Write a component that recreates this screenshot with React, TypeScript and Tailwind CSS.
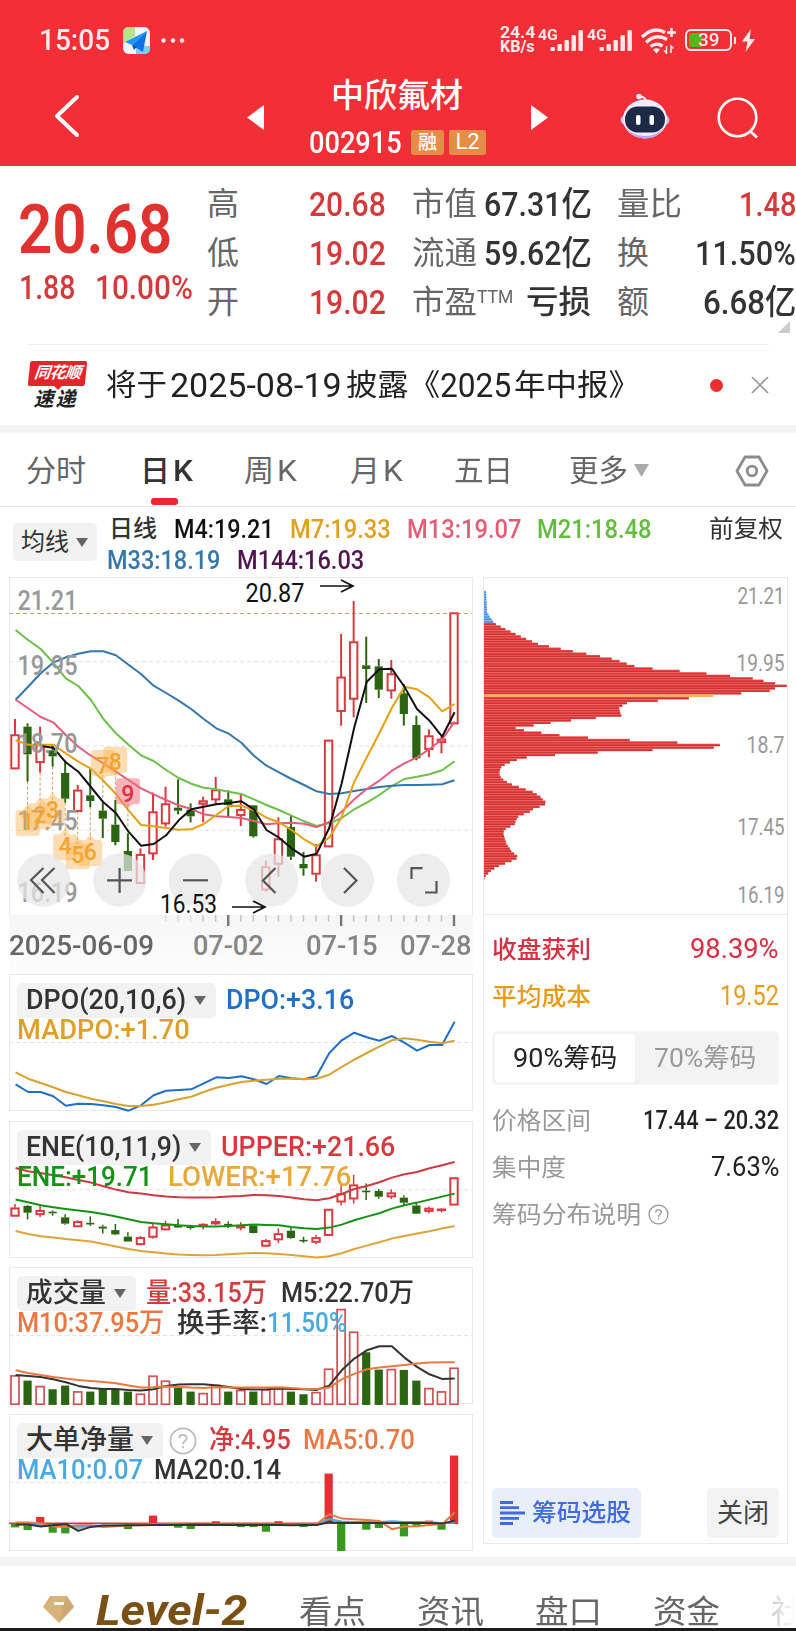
import React, { useLayoutEffect, useRef, useState } from "react";

/** Single-line text condensed horizontally so that it fills its box. */
function Fit({ className, children }: { className: string; children: React.ReactNode }) {
  const inner = useRef<HTMLSpanElement>(null);
  const outer = useRef<HTMLSpanElement>(null);
  const [scale, setScale] = useState(1);
  useLayoutEffect(() => {
    if (inner.current && outer.current && inner.current.offsetWidth) {
      setScale(outer.current.offsetWidth / inner.current.offsetWidth);
    }
  }, [children]);
  return (
    <span ref={outer} className={`block shrink-0 leading-none ${className}`}>
      <span
        ref={inner}
        className="inline-block origin-left whitespace-pre align-top leading-none"
        style={{ transform: `scaleX(${scale})` }}
      >
        {children}
      </span>
    </span>
  );
}

const STEP = 12.543;
const cx = (i: number) => 15 + STEP * i;

// rising, high, body top, body bottom, low (thirds of a pixel below the pane origin)
const candles: [number, number, number, number, number][] = [
  [1, 447, 494, 597, 597], [0, 460, 470, 553, 635], [1, 470, 524, 578, 608], [0, 525, 541, 559, 590],
  [0, 572, 609, 686, 698], [1, 645, 660, 725, 725], [0, 597, 676, 693, 712], [0, 698, 722, 746, 804],
  [0, 690, 764, 816, 826], [0, 790, 843, 903, 903], [1, 835, 853, 941, 941], [1, 668, 725, 852, 870],
  [1, 650, 701, 762, 770], [0, 628, 713, 722, 733], [0, 700, 719, 739, 757], [1, 680, 692, 703, 757],
  [1, 621, 659, 690, 702], [0, 661, 688, 705, 740], [1, 670, 718, 737, 768], [0, 706, 706, 799, 803],
  [1, 872, 890, 960, 965], [1, 742, 806, 883, 920], [0, 737, 771, 860, 870], [0, 846, 882, 895, 917],
  [1, 822, 854, 913, 935], [1, 510, 510, 831, 831], [1, 192, 321, 425, 467], [1, 93, 215, 388, 442],
  [0, 200, 286, 297, 399], [0, 267, 289, 359, 384], [1, 270, 311, 363, 386], [0, 342, 370, 432, 467],
  [0, 437, 465, 565, 571], [1, 478, 497, 539, 562], [1, 500, 507, 518, 550], [1, 128, 128, 462, 462],
];

const m21 = [180, 210, 237, 278, 325, 348, 390, 447, 490, 524, 556, 573, 600, 624, 641, 653, 658, 665, 672, 688, 705, 720, 737, 754, 768, 760, 744, 718, 698, 675, 648, 627, 620, 613, 601, 574];
const m33 = [389, 350, 310, 278, 262, 251, 244, 244, 256, 284, 312, 347, 369, 392, 417, 447, 475, 491, 518, 557, 587, 607, 627, 645, 664, 672, 670, 663, 657, 651, 647, 645, 645, 644, 643, 631];
const m13 = [389, 415, 441, 457, 495, 530, 557, 580, 605, 630, 655, 673, 690, 706, 717, 733, 739, 741, 744, 753, 763, 760, 758, 761, 771, 757, 725, 688, 657, 632, 602, 580, 562, 537, 508, 455];
const m7 = [511, 524, 524, 524, 550, 575, 596, 632, 672, 721, 765, 769, 774, 779, 778, 762, 735, 708, 707, 721, 743, 757, 780, 808, 829, 803, 741, 635, 562, 490, 413, 350, 358, 382, 424, 402];
const m4 = [528, 533, 577, 605, 651, 697, 729, 785, 827, 822, 796, 751, 718, 710, 703, 699, 694, 718, 780, 803, 835, 860, 851, 774, 640, 472, 335, 298, 296, 350, 417, 452, 500, 427];

const dpo = [358, 381, 381, 394, 422, 416, 417, 421, 426, 437, 421, 391, 377, 375, 373, 355, 337, 339, 334, 343, 357, 333, 340, 343, 333, 265, 226, 203, 217, 227, 213, 233, 257, 240, 240, 170];
const madpo = [322, 341, 354, 367, 381, 391, 401, 409, 417, 423, 423, 419, 412, 403, 395, 381, 368, 359, 351, 347, 344, 341, 341, 342, 341, 329, 306, 284, 264, 245, 226, 220, 224, 230, 235, 227];
const upper = [608, 618, 623, 630, 636, 644, 652, 663, 673, 681, 685, 690, 694, 696, 697, 697, 696, 694, 692, 689, 690, 692, 697, 702, 705, 699, 686, 671, 662, 651, 637, 627, 620, 609, 600, 590];
const ene = [703, 711, 720, 726, 731, 736, 740, 746, 754, 762, 770, 774, 777, 780, 782, 784, 784, 782, 780, 778, 779, 780, 785, 789, 791, 787, 778, 765, 754, 744, 730, 720, 712, 703, 694, 685];
const lower = [797, 806, 813, 817, 821, 825, 829, 836, 844, 851, 857, 861, 865, 868, 869, 870, 869, 867, 865, 863, 864, 866, 869, 873, 877, 873, 864, 851, 841, 831, 820, 812, 805, 798, 790, 782];
const volume = [346, 363, 378, 389, 378, 394, 396, 388, 390, 396, 401, 347, 362, 385, 396, 399, 374, 396, 390, 396, 388, 385, 396, 404, 396, 326, 147, 215, 278, 330, 327, 331, 363, 384, 394, 323];
const vol5 = [346, 349, 352, 359, 368, 379, 385, 388, 388, 391, 393, 389, 379, 375, 374, 374, 378, 382, 388, 390, 389, 387, 388, 389, 391, 378, 332, 297, 272, 260, 260, 294, 322, 344, 358, 357];
const vol10 = [332, 340, 346, 352, 357, 361, 364, 367, 371, 378, 384, 383, 381, 382, 384, 385, 383, 384, 384, 384, 384, 383, 385, 388, 388, 384, 359, 343, 329, 324, 320, 316, 312, 309, 308, 308];
const net: [number, number][] = [[0, 802], [1, 810], [2, 771], [3, 818], [4, 820], [9, 807], [11, 767], [13, 803], [14, 807], [16, 784], [17, 798], [18, 801], [19, 801], [20, 815], [21, 784], [23, 801], [25, 641], [26, 873], [28, 809], [29, 804], [31, 829], [32, 797], [33, 782], [34, 809], [35, 587]];
const net5 = [788, 788, 790, 800, 801, 796, 796, 801, 799, 797, 794, 793, 793, 793, 795, 795, 794, 794, 794, 794, 794, 794, 794, 794, 793, 762, 776, 778, 780, 783, 808, 800, 799, 795, 793, 758];
const net10 = [793, 794, 796, 796, 797, 800, 799, 798, 797, 796, 795, 795, 795, 795, 795, 795, 795, 795, 795, 795, 795, 795, 795, 795, 793, 777, 785, 786, 786, 786, 784, 786, 786, 786, 790, 788];
const net20 = [794, 794, 800, 796, 792, 813, 801, 797, 797, 796, 796, 795, 795, 795, 795, 795, 795, 795, 795, 795, 795, 795, 796, 795, 795, 787, 789, 789, 789, 789, 789, 789, 789, 789, 791, 782];

const chips: [number, number][] = [
  [498, 47], [560, 50], [575, 58], [590, 69], [597, 76], [612, 105], [627, 136], [642, 168], [657, 204], [663, 232], [671, 270], [679, 309], [686, 348], [693, 387], [701, 425], [708, 447], [716, 470], [723, 492], [731, 551], [738, 630], [745, 706], [753, 783], [760, 847], [768, 882], [775, 915], [782, 950], [789, 915], [797, 898], [804, 817], [811, 737], [819, 658], [827, 557], [834, 470], [842, 455], [849, 446], [857, 448], [864, 450], [871, 453], [879, 370], [886, 300], [893, 242], [901, 187], [908, 136], [915, 158], [922, 207], [930, 265], [937, 343], [945, 478], [952, 613], [959, 750], [967, 735], [974, 560], [982, 382], [989, 259], [996, 172], [1004, 140], [1011, 120], [1018, 104], [1026, 93], [1034, 89], [1045, 86], [1056, 91], [1063, 98], [1070, 108], [1078, 124], [1085, 144], [1093, 166], [1100, 186], [1107, 198], [1115, 210], [1122, 216], [1130, 225], [1137, 225], [1144, 210], [1152, 188], [1159, 180], [1167, 160], [1174, 144], [1181, 139], [1190, 135], [1197, 133], [1204, 120], [1212, 105], [1222, 98], [1240, 103], [1256, 108], [1263, 113], [1270, 118], [1280, 124], [1290, 138], [1297, 144], [1305, 130], [1313, 110], [1320, 90], [1328, 75], [1335, 64], [1345, 53], [1352, 46], [1360, 42],
];
function chipAt(y: number) {
  for (let k = 1; k < chips.length; k++) {
    const [y0, x0] = chips[k - 1];
    const [y1, x1] = chips[k];
    if (y <= y1) return x0 + ((x1 - x0) * (y - y0)) / (y1 - y0);
  }
  return 42;
}
const chipRows = Array.from({ length: 117 }, (_, k) => 501 + k * 7.4);

function Line({ data, color, top, from = 0 }: { data: number[]; color: string; top: number; from?: number }) {
  const pts = data.map((v, k) => `${(cx(k + from) + 0.6).toFixed(1)},${(top + v / 3).toFixed(1)}`).join(" ");
  return <polyline points={pts} fill="none" stroke={color} strokeWidth="2" strokeLinejoin="round" />;
}

function Candles({ y, body = 7.4, wick = 2 }: { y: (v: number) => number; body?: number; wick?: number }) {
  return (
    <g>
      {candles.map(([up, h, t, b, l], i) => {
        const x = cx(i);
        const c = up ? "#d93a3f" : "#2c6511";
        const height = Math.max(y(b) - y(t), 1.6);
        return (
          <g key={i} stroke={c}>
            {h < t && <line x1={x} x2={x} y1={y(h)} y2={y(t)} strokeWidth={wick} />}
            {l > b && <line x1={x} x2={x} y1={y(b)} y2={y(l)} strokeWidth={wick} />}
            {up ? (
              <rect x={x - body / 2} y={y(t) + 0.6} width={body} height={Math.max(height - 1.2, 0.6)} fill="#fff" strokeWidth="2" />
            ) : (
              <rect x={x - 4.1} y={y(t)} width="8.2" height={height} fill={c} stroke="none" />
            )}
          </g>
        );
      })}
    </g>
  );
}

function Dash({ y }: { y: number }) {
  return <line x1="9" x2="472" y1={y} y2={y} stroke="#e2e2e2" strokeWidth="1" strokeDasharray="4 3" />;
}

const Caret = ({ className = "" }: { className?: string }) => (
  <svg viewBox="0 0 12 9" className={`h-[9px] w-3 shrink-0 ${className}`}>
    <path d="M0 0H12L6 9Z" fill="#666" />
  </svg>
);

const arrow = "M0 0H33M21 -6L33 0L21 6";

function MainChart() {
  const y = (v: number) => 570 + v / 3;
  const marks: [number, number, number, boolean][] = [
    [1, 753, 1, false], [2, 733, 2, false], [3, 718, 3, false], [4, 826, 4, false], [5, 853, 5, false], [6, 843, 6, false], [7, 585, 7, true], [8, 575, 8, true], [9, 670, 9, true],
  ];
  return (
    <svg viewBox="10 578 462 337" className="block h-[337px] w-[462px]">
      {[275, 528, 781].map((v) => <Dash key={v} y={y(v)} />)}
      <line x1="9" x2="472" y1="613.5" y2="613.5" stroke="#b5a36a" strokeWidth="1.2" strokeDasharray="4 3" />
      {marks.map(([i, v, , above]) => (
        <line key={i} x1={cx(i)} x2={cx(i)} y1={above ? y(v) : y(candles[i][4])} y2={above ? y(candles[i][1]) : y(v)} stroke="#c9a267" strokeWidth="1" strokeDasharray="3 2" />
      ))}
      <Candles y={y} />
      <Line data={m21} color="#6cc04a" top={570} />
      <Line data={m33} color="#3477a8" top={570} />
      <Line data={m13} color="#e55d7c" top={570} />
      <Line data={m7} color="#e5a016" top={570} />
      <Line data={m4} color="#111" top={570} from={2} />
      <g fill="#999" fontSize="27" fontWeight="500">
        {[["21.21", 610.3], ["19.95", 675], ["18.70", 752.7], ["17.45", 830], ["16.19", 901.5]].map(([t, v]) => (
          <text key={t} x="17.5" y={v} textLength="60" lengthAdjust="spacingAndGlyphs">{t}</text>
        ))}
      </g>
      {marks.map(([i, v, n, above]) => {
        const px = cx(i);
        const py = y(v);
        return (
          <g key={n}>
            <path
              d={above
                ? `M${px - 9} ${py - 15}h18q3 0 3 3v20q0 3 -3 3h-4l-5 4l-5 -4h-4q-3 0 -3 -3v-20q0 -3 3 -3Z`
                : `M${px - 9} ${py - 11}h4l5 -6l5 6h4q3 0 3 3v20q0 3 -3 3h-18q-3 0 -3 -3v-20q0 -3 3 -3Z`}
              fill={n === 9 ? "#f26a78" : "#fbb04c"}
              fillOpacity={n === 9 ? 0.5 : 0.42}
            />
            <text x={px} y={py + 8.5} textAnchor="middle" fontSize="23" fontWeight="500" fill={n === 9 ? "#dc3040" : "#f5a32a"}>{n}</text>
          </g>
        );
      })}
      <g fill="#e6e6e6" fillOpacity="0.72">
        {[43.7, 119.7, 195.3, 271.7, 347.3, 423.3].map((x) => <circle key={x} cx={x} cy="880.2" r="26.6" />)}
      </g>
      <g fill="none" stroke="#555" strokeWidth="2.200">
        <path d="M43.500 868L31 880L43.500 893M54.500 868L42 880L54.500 893" />
        <path d="M107 880.300H132M119.600 868V893" />
        <path d="M183 880.300H208" />
        <path d="M275.500 868L263 880.500L275.500 893" />
        <path d="M344 868L356.500 880.500L344 893" />
        <path d="M411.500 879V868.200H422.500M436.500 881V892.500H425" />
      </g>
      <g fill="#111" fontSize="25">
        <text x="245.500" y="601.500" textLength="59" lengthAdjust="spacingAndGlyphs">20.87</text>
        <text x="160" y="913" textLength="57" lengthAdjust="spacingAndGlyphs">16.53</text>
      </g>
      <g fill="none" stroke="#111" strokeWidth="1.7">
        <path d={arrow} transform="translate(320 586)" />
        <path d={arrow} transform="translate(232 907)" />
      </g>
    </svg>
  );
}

function TimeAxis() {
  return (
    <div className="bg-linear-to-b from-[#f6f6f6] to-[#fdfdfd]">
      <svg viewBox="9 915 464 15" className="block h-[15px] w-[464px]">
        {candles.map((_, i) => {
          if (i < 12) return null;
          const big = i === 17 || i === 26 || i === 35;
          return <line key={i} x1={cx(i)} x2={cx(i)} y1="915" y2={big ? 926 : 921.5} stroke={big ? "#777" : i < 15 ? "#ddd" : "#c4c4c4"} strokeWidth={big ? 2.4 : 1.5} />;
        })}
      </svg>
      <div className="flex h-[44px] pt-[3px] text-[27px] font-medium text-[#858585]">
        <Fit className="w-[145px] text-[#666]">2025-06-09</Fit>
        <Fit className="ml-[39px] w-[71px]">07-02</Fit>
        <Fit className="ml-[42px] w-[72px]">07-15</Fit>
        <Fit className="ml-[22px] w-[72px]">07-28</Fit>
      </div>
    </div>
  );
}

function Pane({ children, box, name, nameWidth, caretGap, extra, first, second }: {
  children: React.ReactNode; box: string; name: string; nameWidth: string; caretGap: string;
  extra?: React.ReactNode; first: React.ReactNode; second: React.ReactNode;
}) {
  return (
    <div className="relative mb-[9.7px] h-[137px] w-[464px] border border-[#e9e9e9]">
      <svg viewBox={box} className="block h-[135px] w-[462px] overflow-visible">{children}</svg>
      <div className="absolute inset-x-0 top-[8px] pl-[7px] text-[27px] font-medium">
        <div className="flex h-[35px] items-center">
          <div className="flex h-[35px] items-center rounded-[5px] bg-[#f2f2f2] pr-[10px] pl-[9px]">
            <Fit className={`text-[#333] ${nameWidth}`}>{name}</Fit>
            <Caret className={caretGap} />
          </div>
          {extra}
          {first}
        </div>
        <div className="flex h-[25px] items-center">{second}</div>
      </div>
    </div>
  );
}

const Help = ({ className }: { className: string }) => (
  <svg viewBox="0 0 28 28" fill="none" stroke="currentColor" className={`shrink-0 ${className}`}>
    <circle cx="14" cy="14" r="12.600" strokeWidth="1.7" />
    <path d="M10.300 11.300Q10.300 7.800 14 7.800T17.700 11.200Q17.700 13 15.600 14.200Q14 15.200 14 17.200M14 19V21" strokeWidth="1.7" />
  </svg>
);

function Signal() {
  return (
    <div className="flex w-[46px] shrink-0 items-end">
      <Fit className="mb-[9px] w-[20px] text-[15px] font-bold">4G</Fit>
      <svg viewBox="0 0 34 22" className="-ml-[8px] h-[22px] w-[34px]" fill="currentColor">
        {[4, 7, 11, 16, 21].map((h, k) => <rect key={k} x={k * 7 + 0.5} y={21 - h} width="4.400" height={h} rx="1" />)}
      </svg>
    </div>
  );
}

function Header() {
  return (
    <header className="h-[166px] bg-[#f22f37] text-white">
      <div className="flex h-[80px] items-center pl-[39px] text-white/90">
        <Fit className="w-[71px] text-[30px] font-medium">15:05</Fit>
        <svg viewBox="0 0 27 27" className="ml-[13px] h-[27px] w-[27px]">
          <rect width="27" height="27" rx="6" fill="#eef6f8" />
          <path d="M6 0H12V9L0 17V6Q0 0 6 0Z" fill="#b5e48c" />
          <path d="M13 19H27V21Q27 27 21 27H13Z" fill="#74d2f5" />
          <path d="M24 4L2 15L9 18Z" fill="#1e96f5" />
          <path d="M24 4L9 18L20 25Z" fill="#0f73e6" />
          <path d="M9 18L11 23L13.500 20Z" fill="#0a4fae" />
        </svg>
        <svg viewBox="0 0 24 5" className="ml-[11px] h-[5px] w-6" fill="currentColor">
          <circle cx="2.500" cy="2.500" r="2.200" /><circle cx="12" cy="2.500" r="2.200" /><circle cx="21" cy="2.500" r="2.200" />
        </svg>
        <div className="ml-[315px] text-[16px] font-bold">
          <Fit className="w-[35px]">24.4</Fit>
          <Fit className="w-[35px] -mt-[2px]">KB/s</Fit>
        </div>
        <div className="ml-[3px] flex gap-[3px]"><Signal /><Signal /></div>
        <svg viewBox="0 0 37 27" className="ml-[7px] h-[27px] w-[37px]" fill="none" stroke="currentColor">
          <path d="M2 10Q14 -1 25 5.500M6 15.500Q16 6 27 12.500M10.500 19.500Q16.500 15 22.500 19" strokeWidth="3.400" />
          <path d="M13 22.500Q16.500 20 20 22.500L16.500 26.500Z" fill="currentColor" stroke="none" />
          <path d="M31.500 1V10M27 5.500H36" strokeWidth="2.600" />
          <path d="M26.500 19V26L24 23.500M31 26V19L33.500 21.500" strokeWidth="1.500" />
        </svg>
        <div className="ml-[8px] flex items-center">
          <div className="flex h-[22px] w-[47px] items-center rounded-[6px] border-2 border-white/90 bg-linear-to-r from-[#5cb31a] from-[34%] to-transparent to-[34%] bg-clip-content p-[2px]">
            <Fit className="ml-[9px] w-[21px] text-[18px] font-medium">39</Fit>
          </div>
          <div className="ml-[2px] h-[7px] w-[2px] bg-white/90" />
        </div>
        <svg viewBox="0 0 13 23" className="ml-[6px] h-[23px] w-[13px]" fill="currentColor">
          <path d="M9 0L0 12.500H5.500L3.500 23L13 10H7.500Z" />
        </svg>
      </div>
      <div className="flex h-[86px] items-start">
        <svg viewBox="0 0 26 44" className="mt-[14px] ml-[54px] h-[44px] w-[26px]" fill="none" stroke="#fff" strokeWidth="4" strokeLinecap="round" strokeLinejoin="round">
          <path d="M23 3L3 22L23 41" />
        </svg>
        <svg viewBox="0 0 17 25" className="mt-[25px] ml-[167px] h-[25px] w-[17px]"><path d="M17 0V25L0 12.500Z" fill="#fff" /></svg>
        <div className="ml-[44px] w-[181px]">
          <Fit className="mt-[-1px] ml-[23px] w-[132px] text-[33px] font-medium">中欣氟材</Fit>
          <div className="mt-[15px] flex h-[30px] items-center">
            <Fit className="ml-[1px] w-[93px] text-[31px] font-medium">002915</Fit>
            <div className="ml-[9px] flex h-[25px] w-[33px] items-center justify-center rounded-[3px] bg-[#e58d46] text-[19px] leading-none font-medium">融</div>
            <div className="ml-[5px] flex h-[25px] w-[37px] items-center justify-center rounded-[3px] bg-[#e58d46] text-[22px] leading-none">L2</div>
          </div>
        </div>
        <svg viewBox="0 0 17 25" className="mt-[25px] ml-[42px] h-[25px] w-[17px]"><path d="M0 0V25L17 12.500Z" fill="#fff" /></svg>
        <svg viewBox="0 0 50 47" className="mt-[13px] ml-[72px] h-[47px] w-[50px]">
          <path d="M26 9Q26 4 20 3.500" fill="none" stroke="#eae6fa" strokeWidth="2" />
          <circle cx="19" cy="3.500" r="2.800" fill="#f5f0ff" />
          <ellipse cx="25" cy="27" rx="24.500" ry="10" fill="#c4bdf2" />
          <ellipse cx="25" cy="26" rx="22" ry="19.500" fill="#f0edff" />
          <path d="M5 34Q13 45.500 25 45.500T45 34Q37 43 25 43T5 34Z" fill="#b7a9ef" />
          <rect x="5" y="13.500" width="40" height="26" rx="12.500" fill="#1c2a48" />
          <rect x="16" y="22" width="4.500" height="10" rx="2" fill="#fff" />
          <rect x="29.500" y="22" width="4.500" height="10" rx="2" fill="#fff" />
        </svg>
        <svg viewBox="0 0 42 42" className="mt-[17px] ml-[47px] h-[42px] w-[42px]" fill="none" stroke="#fff" strokeWidth="2.600">
          <circle cx="20.500" cy="20.500" r="18.800" /><path d="M33 34L40 40.500" />
        </svg>
      </div>
    </header>
  );
}

function Quote() {
  return (
    <section className="relative flex h-[178px] bg-white font-medium text-[#333]">
      <div className="w-[207px] pt-[29px] pl-[18px] text-[#e0322f]">
        <Fit className="w-[154px] text-[69px] font-semibold">20.68</Fit>
        <div className="mt-[6px] flex text-[34px] text-[#d43a3a]">
          <Fit className="ml-[1px] w-[56px]">1.88</Fit>
          <Fit className="ml-[20px] w-[98px]">10.00%</Fit>
        </div>
      </div>
      <div className="w-[179px] pt-[13px] text-[34px] text-[#d43a3a]">
        {[["高", "20.68"], ["低", "19.02"], ["开", "19.02"]].map(([k, v]) => (
          <div key={k} className="flex h-[49px] items-center justify-between">
            <span className="text-[32px] leading-none font-normal text-[#666]">{k}</span>
            <Fit className="w-[77px]">{v}</Fit>
          </div>
        ))}
      </div>
      <div className="ml-[26px] w-[180px] pt-[13px] text-[34px]">
        {[["市值", "67.31亿"], ["流通", "59.62亿"]].map(([k, v]) => (
          <div key={k} className="flex h-[49px] items-center justify-between">
            <Fit className="w-[65px] text-[32px] font-normal text-[#666]">{k}</Fit>
            <Fit className="w-[108px]">{v}</Fit>
          </div>
        ))}
        <div className="flex h-[49px] items-center">
          <Fit className="w-[65px] text-[32px] font-normal text-[#666]">市盈</Fit>
          <Fit className="mb-[10px] w-[36px] text-[19px] font-normal text-[#666]">TTM</Fit>
          <Fit className="ml-[13px] w-[65px] text-[32px]">亏损</Fit>
        </div>
      </div>
      <div className="ml-[25px] w-[179px] pt-[13px] text-[34px]">
        <div className="flex h-[49px] items-center justify-between">
          <Fit className="w-[65px] text-[32px] font-normal text-[#666]">量比</Fit>
          <Fit className="w-[57px] text-[#d43a3a]">1.48</Fit>
        </div>
        <div className="flex h-[49px] items-center justify-between">
          <span className="text-[32px] leading-none font-normal text-[#666]">换</span>
          <Fit className="w-[101px]">11.50%</Fit>
        </div>
        <div className="flex h-[49px] items-center justify-between">
          <span className="text-[32px] leading-none font-normal text-[#666]">额</span>
          <Fit className="w-[93px]">6.68亿</Fit>
        </div>
      </div>
      <svg viewBox="0 0 12 12" className="absolute right-[6px] bottom-[11px] h-3 w-3"><path d="M12 0V12H0Z" fill="#ccc" /></svg>
    </section>
  );
}

function News() {
  return (
    <section className="mx-[27px] flex h-[81px] items-center border-t border-[#f0f0f0]">
      <div className="w-[61px] shrink-0 text-center leading-none">
        <div className="mx-[2px] -skew-x-6 rounded-[2px] bg-[#e3262c] pt-[3px] pb-[4px] text-[16px] leading-[18px] font-bold tracking-[-0.5px] text-white italic">同花顺</div>
        <svg viewBox="0 0 8 4" className="mx-auto block h-1 w-2"><path d="M0 0H8L4 4Z" fill="#e3262c" /></svg>
        <div className="-mt-[1px] ml-[-4px] text-[20px] leading-[20px] font-bold tracking-[2px] text-[#222] italic">速递</div>
      </div>
      <div className="ml-[18px] flex items-center text-[30px] font-normal text-[#222]">
        <Fit className="w-[61px]">将于</Fit>
        <Fit className="ml-[3px] w-[172px] text-[33px]">2025-08-19</Fit>
        <Fit className="ml-[4px] w-[94px]">披露《</Fit>
        <Fit className="w-[71px] text-[33px]">2025</Fit>
        <Fit className="ml-[3px] w-[126px]">年中报》</Fit>
      </div>
      <div className="ml-auto h-[13px] w-[13px] rounded-full bg-[#eb2d2d]" />
      <svg viewBox="0 0 18 18" className="ml-[28px] h-[18px] w-[18px]" stroke="#999" strokeWidth="1.700"><path d="M1 1L17 17M17 1L1 17" /></svg>
    </section>
  );
}

function Tabs() {
  return (
    <nav className="flex h-[74px] items-center border-b border-[#e6e6e6] pt-[2px] pl-[26px] text-[30px] text-[#666]">
      <Fit className="w-[60px]">分时</Fit>
      <div className="relative ml-[54px] flex text-[#333]">
        <Fit className="w-[30px] font-medium">日</Fit>
        <Fit className="ml-[3px] w-[20px] font-medium">K</Fit>
        <div className="absolute top-[42px] left-[11px] h-[7px] w-[27px] rounded-[3px] bg-[#e12d32]" />
      </div>
      <Fit className="ml-[51px] w-[30px]">周</Fit>
      <Fit className="ml-[3px] w-[20px]">K</Fit>
      <Fit className="ml-[53px] w-[30px]">月</Fit>
      <Fit className="ml-[3px] w-[20px]">K</Fit>
      <Fit className="ml-[51px] w-[59px]">五日</Fit>
      <Fit className="ml-[56px] w-[59px]">更多</Fit>
      <svg viewBox="0 0 15 13" className="ml-[6px] h-[13px] w-[15px]"><path d="M0 0H15L7.500 13Z" fill="#aaa" /></svg>
      <svg viewBox="0 0 34 32" className="ml-[86px] h-8 w-[34px]" fill="none" stroke="#8c8c8c" strokeWidth="2.800" strokeLinejoin="round">
        <path d="M10 2H24L32 16L24 30H10L2 16Z" /><circle cx="17" cy="16" r="4.800" />
      </svg>
    </nav>
  );
}

function Legend() {
  return (
    <div className="flex h-[70px] items-start pl-[13px]">
      <div className="mt-[16px] flex h-[38px] w-[84px] items-center rounded-[5px] bg-[#f2f2f2] pl-[8px]">
        <Fit className="w-[48px] text-[24px] text-[#333]">均线</Fit>
        <Caret className="ml-[7px]" />
      </div>
      <div className="ml-[12px] pt-[6px] text-[26px] font-medium">
        <div className="flex h-[31px] items-center">
          <Fit className="w-[48px] text-[24px] text-[#333]">日线</Fit>
          <Fit className="ml-[17px] w-[100px] text-[#111]">M4:19.21</Fit>
          <Fit className="ml-[16px] w-[101px] text-[#e0a020]">M7:19.33</Fit>
          <Fit className="ml-[16px] w-[114px] text-[#e55d75]">M13:19.07</Fit>
          <Fit className="ml-[16px] w-[114px] text-[#62bd3c]">M21:18.48</Fit>
          <Fit className="ml-[58px] w-[74px] text-[24px] font-normal text-[#333]">前复权</Fit>
        </div>
        <div className="flex h-[31px] items-center">
          <Fit className="-ml-[2px] w-[113px] text-[#3477a8]">M33:18.19</Fit>
          <Fit className="ml-[17px] w-[127px] text-[#501450]">M144:16.03</Fit>
        </div>
      </div>
    </div>
  );
}

function ChipPanel() {
  return (
    <aside className="ml-[10px] flex h-[967px] w-[305px] flex-col border border-[#e9e9e9]">
      <svg viewBox="484 578 303 336" className="block h-[336px] w-[303px] shrink-0">
        {chipRows.map((r, k) => {
          const width = (chipAt(r) - 41) / 3;
          const avg = k === 42;
          return (
            <g key={k}>
              <rect x="484" y={425 + r / 3 - 1.2} width={width} height="2.500" fill={k < 13 ? "#78aef0" : avg ? "#f7b04e" : "#ee4a48"} />
              {!avg && <rect x="484" y={425 + r / 3 - 0.2} width={width} height="1.300" fill={k < 13 ? "#4a90e2" : "#cb3434"} />}
            </g>
          );
        })}
        <g fill="#999" fontSize="23">
          {[["21.21", 603.5, 47], ["19.95", 671, 48], ["18.7", 753, 38], ["17.45", 834.5, 47], ["16.19", 903, 47]].map(([t, v, w]) => (
            <text key={t} x={784.5 - Number(w)} y={v} textLength={w} lengthAdjust="spacingAndGlyphs">{t}</text>
          ))}
        </g>
      </svg>
      <div className="flex grow flex-col border-t border-[#e9e9e9] pr-[8px] pl-[8px] text-[24px] text-[#999]">
        <div className="mt-[11px] flex h-[47px] items-center justify-between text-[#dc2c40]">
          <Fit className="w-[99px] font-medium">收盘获利</Fit><Fit className="w-[89px] text-[27px]">98.39%</Fit>
        </div>
        <div className="flex h-[47px] items-center justify-between text-[#eb9a16]">
          <Fit className="w-[99px] font-medium">平均成本</Fit><Fit className="w-[59px] text-[27px]">19.52</Fit>
        </div>
        <div className="mt-[11px] flex h-[54px] rounded-[6px] bg-[#f3f3f3] p-[3px]">
          <div className="flex w-[140px] items-center justify-center rounded-[3px] bg-white text-[#222]"><Fit className="w-[104px] text-[26px]">90%筹码</Fit></div>
          <div className="flex w-[140px] items-center justify-center"><Fit className="w-[102px] text-[26px]">70%筹码</Fit></div>
        </div>
        <div className="mt-[12px] flex h-[47px] items-center justify-between">
          <Fit className="w-[99px]">价格区间</Fit><Fit className="w-[136px] text-[25px] font-medium text-[#222]">17.44 – 20.32</Fit>
        </div>
        <div className="flex h-[47px] items-center justify-between">
          <Fit className="w-[74px]">集中度</Fit><Fit className="w-[68px] text-[27px] text-[#222]">7.63%</Fit>
        </div>
        <div className="flex h-[47px] items-center">
          <Fit className="w-[149px]">筹码分布说明</Fit><Help className="ml-[7px] h-[21px] w-[21px]" />
        </div>
        <div className="mt-auto mb-[5px] flex h-[50px] justify-between">
          <div className="flex w-[149px] items-center rounded-[5px] bg-[#e9eefb] pl-[8px] text-[#3f6ae0]">
            <svg viewBox="0 0 25 24" className="mr-[7px] h-6 w-[25px]" stroke="#3f6ae0" strokeWidth="2.800">
              <path d="M0 1.500H13M0 6.700H19M0 12H25M0 17.300H19M0 22.500H13" />
            </svg>
            <Fit className="w-[99px] font-medium">筹码选股</Fit>
          </div>
          <div className="flex w-[72px] items-center justify-center rounded-[5px] bg-[#f3f3f3] text-[#444]"><Fit className="w-[52px] text-[26px]">关闭</Fit></div>
        </div>
      </div>
    </aside>
  );
}

function Charts() {
  return (
    <main className="flex h-[980px] pl-[9px]">
      <div className="w-[464px] shrink-0">
        <div className="border-x border-t border-[#e9e9e9]"><MainChart /></div>
        <TimeAxis />
        <Pane box="10 975 462 135" name="DPO(20,10,6)" nameWidth="w-[160px]" caretGap="ml-[8px]"
          first={<Fit className="ml-[10px] w-[128px] text-[#1f70c8]">DPO:+3.16</Fit>}
          second={<Fit className="w-[173px] text-[#dfa02a]">MADPO:+1.70</Fit>}>
          <Dash y={1042.5} />
          <Line data={dpo} color="#1f70c8" top={965} />
          <Line data={madpo} color="#d9a130" top={965} />
        </Pane>
        <Pane box="10 1121.7 462 135" name="ENE(10,11,9)" nameWidth="w-[155px]" caretGap="ml-[8px]"
          first={<Fit className="ml-[10px] w-[174px] text-[#d63a3e]">UPPER:+21.66</Fit>}
          second={<><Fit className="w-[136px] text-[#159215]">ENE:+19.71</Fit><Fit className="ml-[15px] w-[183px] text-[#e8a83a]">LOWER:+17.76</Fit></>}>
          <Dash y={1189.5} />
          <Candles y={(v) => 965 + (637 + (v - 128) * 0.2475) / 3} wick={1.5} />
          <Line data={upper} color="#cc3a40" top={965} />
          <Line data={ene} color="#159215" top={965} />
          <Line data={lower} color="#e0a33a" top={965} />
        </Pane>
        <Pane box="10 1268.4 462 135" name="成交量" nameWidth="w-[80px]" caretGap="ml-[8px]"
          first={<><Fit className="ml-[10px] w-[121px] text-[#d63a3e]">量:33.15万</Fit><Fit className="ml-[14px] w-[133px] text-[#333]">M5:22.70万</Fit></>}
          second={<><Fit className="w-[147px] text-[#ea7840]">M10:37.95万</Fit><Fit className="ml-[13px] w-[90px] text-[#333]">换手率:</Fit><Fit className="w-[80px] text-[#4aa9e0]">11.50%</Fit></>}>
          <Dash y={1336} />
          {volume.map((v, i) => candles[i][0]
            ? <rect key={i} x={cx(i) - 4} y={1261 + v / 3} width="8" height={(436 - v) / 3 - 1.7} fill="#fff" stroke="#cf5055" strokeWidth="1.700" />
            : <rect key={i} x={cx(i) - 4.1} y={1260 + v / 3} width="8.200" height={(436 - v) / 3} fill="#2c6511" />)}
          <Line data={vol5} color="#333" top={1260} />
          <Line data={vol10} color="#ea7840" top={1260} />
        </Pane>
        <Pane box="10 1415.1 462 135" name="大单净量" nameWidth="w-[108px]" caretGap="ml-[7px]"
          extra={<Help className="ml-[6px] h-[28px] w-[28px] text-[#bbb]" />}
          first={<><Fit className="ml-[12px] w-[82px] text-[#d63a3e]">净:4.95</Fit><Fit className="ml-[12px] w-[112px] text-[#ea7840]">MA5:0.70</Fit></>}
          second={<><Fit className="w-[126px] text-[#4aa9e0]">MA10:0.07</Fit><Fit className="ml-[11px] w-[127px] text-[#333]">MA20:0.14</Fit></>}>
          <Dash y={1482.500} />
          <path d="M63 1524.500H108L88 1527L77 1530Z" fill="#9fb8dc" />
          {net.map(([i, v]) => {
            const up = v < 790;
            return <rect key={i} x={cx(i) - 4} y={up ? 1260 + v / 3 : 1523.500} width="8.200" height={up ? (792 - v) / 3 : (v - 790) / 3} fill={up ? "#e33033" : "#38981f"} />;
          })}
          <line x1="9" x2="458" y1="1523.300" y2="1523.300" stroke="#e33033" strokeWidth="1.500" />
          <Line data={net10} color="#4aa9e0" top={1260} />
          <Line data={net5} color="#ea7840" top={1260} />
          <Line data={net20} color="#333" top={1260} />
        </Pane>
      </div>
      <ChipPanel />
    </main>
  );
}

function BottomTabs() {
  return (
    <footer className="flex h-[62px] items-end overflow-hidden bg-white pl-[43px] text-[32px] text-[#666]">
      <svg viewBox="0 0 31 27" className="mb-[5px] h-[27px] w-[31px] shrink-0">
        <path d="M7 0H24L31 11L16 27L0 11Z" fill="#d6b27c" />
        <path d="M24 0L31 11L16 27L20 10Z" fill="#c59e66" opacity="0.500" />
        <path d="M11 7.500H21" stroke="#fff" strokeWidth="2.600" />
      </svg>
      <Fit className="mb-[-4px] ml-[22px] w-[152px] text-[43px] font-bold text-[#7b5014] italic">Level-2</Fit>
      <Fit className="mb-0 ml-[51px] w-[67px]">看点</Fit>
      <Fit className="mb-0 ml-[51px] w-[67px]">资讯</Fit>
      <Fit className="mb-0 ml-[51px] w-[67px]">盘口</Fit>
      <Fit className="mb-0 ml-[51px] w-[67px]">资金</Fit>
      <span className="mb-0 ml-[51px] w-[24px] shrink-0 overflow-hidden bg-linear-to-r from-[#c8c8c8] to-white bg-clip-text leading-none text-transparent">社</span>
    </footer>
  );
}

export default function App() {
  return (
    <div className="h-[1631px] w-[796px] overflow-hidden bg-white font-['Roboto','Noto_Sans_CJK_SC',sans-serif]">
      <Header />
      <Quote />
      <News />
      <div className="h-[8px] bg-[#f4f4f4]" />
      <Tabs />
      <Legend />
      <Charts />
      <div className="h-[9px] bg-[#f4f4f4]" />
      <BottomTabs />
      <div className="h-[4px] bg-[#1c1a1b]" />
    </div>
  );
}
